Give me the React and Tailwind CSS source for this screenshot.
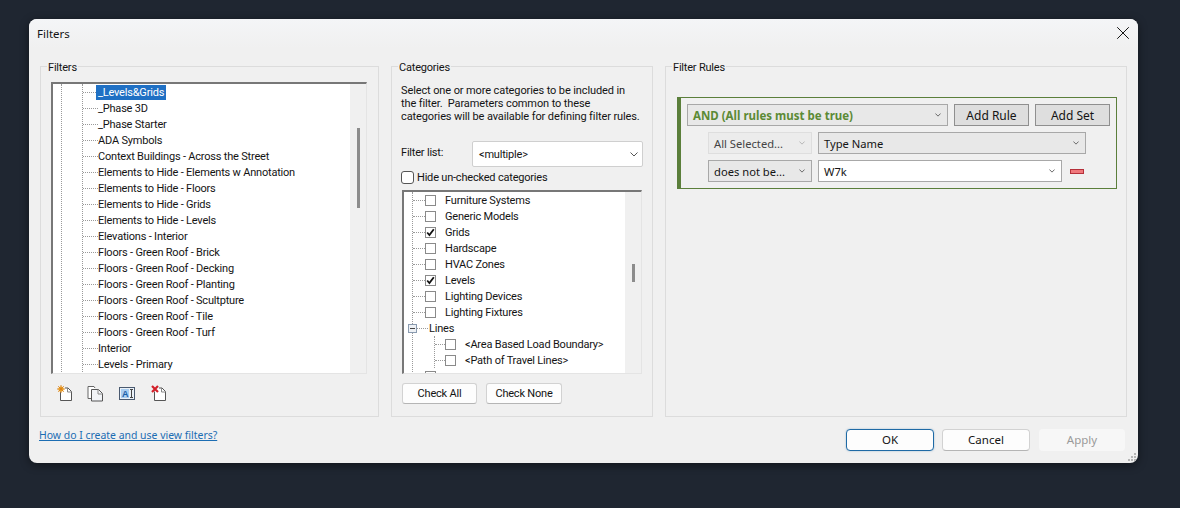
import { X } from "lucide-react"

const filters = [
  "_Phase 3D",
  "_Phase Starter",
  "ADA Symbols",
  "Context Buildings - Across the Street",
  "Elements to Hide - Elements w Annotation",
  "Elements to Hide - Floors",
  "Elements to Hide - Grids",
  "Elements to Hide - Levels",
  "Elevations - Interior",
  "Floors - Green Roof - Brick",
  "Floors - Green Roof - Decking",
  "Floors - Green Roof - Planting",
  "Floors - Green Roof - Scultpture",
  "Floors - Green Roof - Tile",
  "Floors - Green Roof - Turf",
  "Interior",
  "Levels - Primary",
]

const categories = [
  { name: "Furniture Systems" },
  { name: "Generic Models" },
  { name: "Grids", checked: true },
  { name: "Hardscape" },
  { name: "HVAC Zones" },
  { name: "Levels", checked: true },
  { name: "Lighting Devices" },
  { name: "Lighting Fixtures" },
]

const Chevron = ({ small = false, className = "" }) => (
  <svg
    width={small ? 6 : 8}
    height={small ? 4 : 5}
    viewBox="0 0 8 5"
    className={className}
    fill="none"
    stroke={small ? "#666" : "#555"}
    strokeWidth={small ? 1.3 : 1}
  >
    <path d="M0.5 0.5 L4 4 L7.5 0.5" />
  </svg>
)

const Box = ({ checked }) => (
  <span className="flex h-[11px] w-[11px] shrink-0 items-center justify-center border border-[#8a8a8a] bg-white">
    {checked && (
      <svg width="9" height="9" viewBox="0 0 9 9" fill="none" stroke="#111" strokeWidth="1.8">
        <path d="M1.2 4.5 L3.4 7 L7.8 1.2" />
      </svg>
    )}
  </span>
)

const Group = ({ title, className = "", children }) => (
  <div className={`relative h-[351px] border border-[#dcdcdc] ${className}`}>
    <span className="absolute -top-[6px] left-[6px] bg-[#f0f0f0] px-px leading-[14px]">{title}</span>
    {children}
  </div>
)

const Scrollbar = ({ top, height }) => (
  <div className="w-[16px] shrink-0 bg-[#f0f0f0]">
    <div className="ml-[7px] w-[3px] bg-[#8c8c8c]" style={{ marginTop: top, height }} />
  </div>
)

const HLine = ({ w }) => <span className="shrink-0 border-t border-dotted border-[#9a9a9a]" style={{ width: w }} />

const CategoryRow = ({ name, checked, line = 12 }) => (
  <div className="flex h-[16px] items-center">
    <HLine w={line} />
    <Box checked={checked} />
    <span className="ml-[9px] whitespace-nowrap pt-px">{name}</span>
  </div>
)

const Combo = ({ text, className = "", bold = false, chevron = "" }) => (
  <div className={`flex h-[22px] items-center justify-between border pl-[5px] pr-[6px] ${className}`}>
    <span className={`pt-[2px] ${bold ? "text-[11.5px] font-bold text-[#5b8a35]" : ""}`}>{text}</span>
    <Chevron small className={chevron} />
  </div>
)

const RuleButton = ({ children }) => (
  <button className="h-[22px] w-[75px] border border-[#8f8f8f] bg-[#dedede] pt-[2px] text-[12px]">{children}</button>
)

const DocIcon = ({ children }) => (
  <svg width="16" height="17" viewBox="0 0 16 17" fill="none">
    <path d="M3.5 6.5 V15.5 H14.5 V6.5 L11 3 H8" fill="#fff" stroke="#555" />
    <path d="M10.5 3 V7 H14.5" stroke="#888" />
    {children}
  </svg>
)

const Toolbar = () => (
  <div className="mt-[11px] flex pl-[6px]">
    <DocIcon>
      <circle cx="4" cy="4" r="2.6" fill="#f5b32c" />
      <path d="M4 0 V8 M0 4 H8 M1.2 1.2 L6.8 6.8 M6.8 1.2 L1.2 6.8" stroke="#d9811c" strokeWidth="0.9" />
    </DocIcon>
    <svg width="16" height="17" viewBox="0 0 16 17" fill="none" className="ml-[14px]">
      <path d="M5.5 13.5 H1 V1.5 H7 L8 3" stroke="#666" fill="#fff" />
      <path d="M4.5 4.5 H11.5 L15.5 8.5 V16 H4.5 Z" fill="#f2f4f7" stroke="#555" />
      <path d="M11 4.5 V9 H15.5" stroke="#888" />
    </svg>
    <svg width="16" height="17" viewBox="0 0 16 17" fill="none" className="-mt-px ml-[16px]">
      <rect x="0.5" y="3.5" width="15" height="12" fill="#eaf1f8" stroke="#4a5a70" />
      <rect x="2" y="5" width="8" height="9" fill="#a9cdf0" />
      <text x="3" y="13" fontSize="9" fontWeight="700" fontFamily="Liberation Sans" fill="#1a5fa8">A</text>
      <path d="M11 5.5 H14 M12.5 5.5 V13.5 M11 13.5 H14" stroke="#444" />
    </svg>
    <span className="ml-[16px] flex">
      <DocIcon>
        <path d="M1 1 L7 7 M7 1 L1 7" stroke="#d3202a" strokeWidth="2.2" />
      </DocIcon>
    </span>
  </div>
)

const ResizeGrip = () => (
  <svg width="10" height="10" viewBox="0 0 10 10" className="absolute bottom-px right-px" fill="#b5b5b5">
    <rect x="7" y="1" width="2" height="2" />
    <rect x="4" y="4" width="2" height="2" />
    <rect x="7" y="4" width="2" height="2" />
    <rect x="1" y="7" width="2" height="2" />
    <rect x="4" y="7" width="2" height="2" />
    <rect x="7" y="7" width="2" height="2" />
  </svg>
)

export default function App() {
  return (
    <div className="h-[508px] w-[1180px] overflow-hidden bg-[#1f2631] pl-[29px] pt-[19px] font-['Roboto',sans-serif] text-[11px] leading-[16px] tracking-[-0.2px] text-[#141414]">
      <div className="relative h-[444px] w-[1109px] rounded-[8px] bg-[#f0f0f0] shadow-[0_2px_10px_rgba(0,0,0,0.45)]">
        {/* title bar */}
        <div className="flex h-[29px] items-center justify-between rounded-t-[8px] bg-gradient-to-b from-[#f4f5f7] to-[#f0f0f0] pl-[8px] pr-[4px] tracking-normal">
          <span className="font-['Noto_Sans',sans-serif] text-[11.5px]">Filters</span>
          <X size={22} strokeWidth={1} className="-mt-[2px] text-black" />
        </div>

        <div className="flex gap-[12px] pl-[11px] pt-[18px]">
          {/* filters */}
          <Group title="Filters" className="w-[339px] pl-[10px] pt-[15px]">
            <div className="flex h-[292px] w-[316px] border-b border-l-2 border-r border-t-2 border-b-[#e4e4e4] border-l-[#777] border-r-[#e4e4e4] border-t-[#777] bg-white">
              <div className="flex-1 overflow-hidden">
                <div className="ml-[8px] border-l border-dotted border-[#9a9a9a]">
                  <div className="ml-[20px] border-l border-dotted border-[#9a9a9a]">
                    <div className="flex h-[16px] items-center">
                      <HLine w={13} />
                      <span className="bg-[#1f70c4] pl-[2px] pr-[2px] pt-px leading-[14px] text-white">_Levels&amp;Grids</span>
                    </div>
                    {filters.map((f) => (
                      <div key={f} className="flex h-[16px] items-center">
                        <HLine w={15} />
                        <span className="whitespace-nowrap pt-px">{f}</span>
                      </div>
                    ))}
                  </div>
                </div>
              </div>
              <Scrollbar top={44} height={80} />
            </div>
            <Toolbar />
          </Group>

          {/* categories */}
          <Group title="Categories" className="w-[262px]">
            <p className="whitespace-nowrap pl-[9px] pt-[17px] leading-[13px] tracking-[-0.11px]">
              Select one or more categories to be included in
              <br />
              the filter.&nbsp; Parameters common to these
              <br />
              categories will be available for defining filter rules.
            </p>
            <div className="mt-[18px] flex items-center pl-[9px] pr-[9px]">
              <span className="w-[71px] pb-[2px]">Filter list:</span>
              <div className="flex h-[26px] w-[171px] items-center justify-between rounded-[2px] border border-[#cfcfcf] bg-white pl-[6px] pr-[4px]">
                <span className="pt-[2px]">&lt;multiple&gt;</span>
                <Chevron />
              </div>
            </div>
            <div className="mt-[2px] flex items-center gap-[3px] pl-[9px]">
              <span className="h-[13px] w-[13px] rounded-[3px] border border-[#555] bg-white" />
              <span className="pt-px">Hide un-checked categories</span>
            </div>
            <div className="ml-[10px] mt-[4px] flex h-[184px] w-[240px] border-b border-l-2 border-r border-t-2 border-b-[#e4e4e4] border-l-[#777] border-r-[#e4e4e4] border-t-[#777] bg-white">
              <div className="flex-1 overflow-hidden">
                <div className="ml-[8px] border-l border-dotted border-[#9a9a9a]">
                  {categories.map((c) => (
                    <CategoryRow key={c.name} name={c.name} checked={c.checked} />
                  ))}
                  <div className="flex h-[16px] items-center">
                    <span className="-ml-[5px] flex h-[9px] w-[9px] shrink-0 items-center justify-center border border-[#8a9bb0] bg-[#eef1f5]">
                      <span className="h-px w-[5px] bg-[#444]" />
                    </span>
                    <HLine w={11} />
                    <span className="ml-[1px] pt-px">Lines</span>
                  </div>
                  <div className="ml-[21px] border-l border-dotted border-[#9a9a9a]">
                    <CategoryRow name="<Area Based Load Boundary>" line={10} />
                    <CategoryRow name="<Path of Travel Lines>" line={10} />
                  </div>
                  <div className="flex h-[16px] items-center">
                    <HLine w={12} />
                    <Box />
                  </div>
                </div>
              </div>
              <Scrollbar top={72} height={18} />
            </div>
            <div className="mt-[9px] flex gap-[9px] pl-[10px]">
              <button className="h-[21px] w-[75px] rounded-[3px] border border-[#d2d2d2] border-b-[#b5b5b5] bg-[#fdfdfd]">Check All</button>
              <button className="h-[21px] w-[76px] rounded-[3px] border border-[#d2d2d2] border-b-[#b5b5b5] bg-[#fdfdfd]">Check None</button>
            </div>
          </Group>

          {/* rules */}
          <Group title="Filter Rules" className="w-[462px] pl-[11px] pt-[30px]">
            <div className="h-[92px] w-[440px] border border-l-4 border-[#5b7f3b] pl-[6px] pt-[6px] font-['Noto_Sans',sans-serif] text-[11.2px] tracking-normal">
              <div className="flex gap-[6px]">
                <Combo text="AND (All rules must be true)" bold className="w-[261px] border-[#a8a8a8] bg-[#e8e8e8]" />
                <RuleButton>Add Rule</RuleButton>
                <RuleButton>Add Set</RuleButton>
              </div>
              <div className="ml-[21px] mt-[6px] flex gap-[6px]">
                <Combo text="All Selected..." className="w-[104px] border-[#dedede] bg-[#ececec] text-[#444]" chevron="opacity-40" />
                <Combo text="Type Name" className="w-[268px] border-[#a8a8a8] bg-[#e8e8e8]" />
              </div>
              <div className="ml-[21px] mt-[6px] flex items-center gap-[6px]">
                <Combo text="does not be..." className="w-[104px] border-[#a8a8a8] bg-[#e8e8e8]" />
                <Combo text="W7k" className="w-[244px] border-[#a8a8a8] bg-white" />
                <span className="ml-[2px] h-[5px] w-[14px] border border-[#b5303a] bg-[#f0787c]" />
              </div>
            </div>
          </Group>
        </div>

        {/* footer */}
        <div className="flex items-start justify-between pl-[10px] pr-[13px] pt-[12px] tracking-normal">
          <a className="-mt-[2px] font-['Noto_Sans',sans-serif] text-[10.45px] text-[#1c6db3] underline">How do I create and use view filters?</a>
          <div className="flex gap-[8px] font-['Noto_Sans',sans-serif] text-[11.5px]">
            <button className="h-[22px] w-[88px] rounded-[4px] border border-[#1f6aa5] bg-[#fdfdfd] shadow-[0_0_2px_rgba(31,106,165,0.4)]">OK</button>
            <button className="h-[22px] w-[88px] rounded-[4px] border border-[#d2d2d2] border-b-[#b5b5b5] bg-[#fdfdfd]">Cancel</button>
            <button className="ml-px h-[22px] w-[86px] rounded-[4px] bg-[#f7f7f7] text-[#9a9a9a]">Apply</button>
          </div>
        </div>
        <ResizeGrip />
      </div>
    </div>
  )
}
